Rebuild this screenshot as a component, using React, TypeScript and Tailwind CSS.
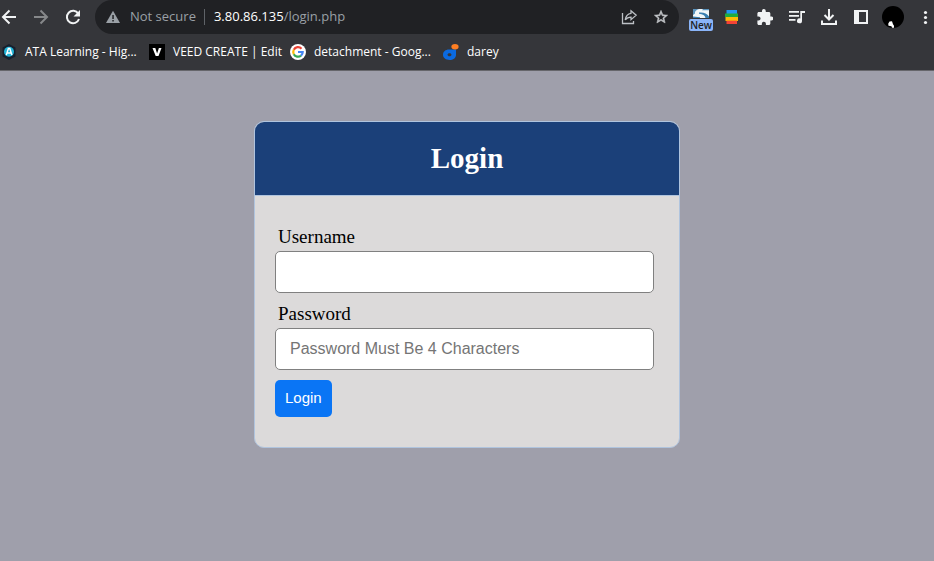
import type { ReactNode } from 'react';

const ICON = 'h-4 w-4 shrink-0';

function ToolButton({ label, children, className = '' }: { label: string; children: ReactNode; className?: string }) {
  return (
    <button type="button" aria-label={label} className={`flex shrink-0 items-center justify-center ${className}`}>
      {children}
    </button>
  );
}

function BackIcon() {
  return (
    <svg viewBox="0 0 16 16" className={ICON} fill="none" stroke="#f1f3f4" strokeWidth="2">
      <path d="M15 8H2.5M8.5 1.5 2 8l6.500 6.500" />
    </svg>
  );
}

function ForwardIcon() {
  return (
    <svg viewBox="0 0 16 16" className={ICON} fill="none" stroke="#86888a" strokeWidth="2">
      <path d="M1 8h12.500M7.500 1.500 14 8l-6.500 6.500" />
    </svg>
  );
}

function ReloadIcon() {
  return (
    <svg viewBox="0 0 16 16" className={ICON}>
      <path d="M13.300 4.600A6.200 6.200 0 1 0 14 10" fill="none" stroke="#f1f3f4" strokeWidth="2" />
      <path d="M15 1v6.500H8.500z" fill="#f1f3f4" />
    </svg>
  );
}

function WarningIcon() {
  return (
    <svg viewBox="0 0 14 14" className="h-3.5 w-3.5 shrink-0">
      <path d="M7 .8 14 13H0z" fill="#9aa0a6" />
      <path d="M6.300 5h1.500v4H6.300zM6.300 10h1.500v1.500H6.300z" fill="#202124" />
    </svg>
  );
}

function ShareIcon() {
  return (
    <svg viewBox="0 0 16 16" className={ICON} fill="none" stroke="#bdc1c6" strokeWidth="1.3">
      <path d="M1.500 4v10.500h11V12" />
      <path d="M10 1.800 15.200 6.200 10 10.700V8.100C7.500 8.100 5.700 8.900 4.200 10.900 4.700 7.500 6.500 4.800 10 4.300z" />
    </svg>
  );
}

function StarIcon() {
  return (
    <svg viewBox="0 0 24 24" className={ICON} fill="#c4c7ca">
      <path d="m22 9.240-7.190-.620L12 2 9.190 8.630 2 9.240l5.460 4.730L5.820 21 12 17.270 18.180 21l-1.630-7.030L22 9.240zM12 15.400l-3.760 2.270 1-4.280-3.320-2.880 4.380-.380L12 6.100l1.710 4.040 4.380.380-3.320 2.880 1 4.280L12 15.400z" stroke="#c4c7ca" strokeWidth=".8" />
    </svg>
  );
}

function ScribeIcon() {
  return (
    <span className="flex flex-col items-center pt-1.5">
      <svg viewBox="0 0 16 9" className="h-[9px] w-4">
        <path d="M0 0h16v9H0z" fill="#f1f6f8" />
        <path d="M0 0h6C3 1 1.500 2.500 2 4.500L0 6zM10 0h6v1.200H9z" fill="#5b93bc" />
        <path d="M6 3.500C10 3 14 4 16 7.500V9h-3.500C12 6.500 10 5.200 6 4.800zM0 7.500 7 8.200V9H0z" fill="#397eaf" />
      </svg>
      <span className="mt-px flex h-3 w-6 items-center justify-center rounded-[2px] bg-[#8ab4f8] text-[10px] font-semibold leading-3 text-[#202124]">
        New
      </span>
    </span>
  );
}

function StackIcon() {
  return (
    <svg viewBox="0 0 16 16" className={ICON}>
      <path d="M2.500 1h10.500v4H2.500z" fill="#2196f3" />
      <path d="M1 4.500h13V8H1z" fill="#1fac3d" />
      <path d="M1.500 8H14v4H1.500z" fill="#fbbc05" />
      <path d="M2.500 11.700h10.500V15H2.500z" fill="#f44336" />
    </svg>
  );
}

function PuzzleIcon() {
  return (
    <svg viewBox="1.500 1 21 21" className={ICON} fill="#f1f3f4">
      <path d="M20.500 11H19V7c0-1.100-.9-2-2-2h-4V3.500a2.500 2.500 0 0 0-5 0V5H4c-1.100 0-2 .9-2 2v3.800h1.500a2.700 2.700 0 0 1 0 5.400H2V20c0 1.100.9 2 2 2h3.800v-1.500a2.700 2.700 0 0 1 5.400 0V22H17c1.100 0 2-.9 2-2v-4h1.500a2.500 2.500 0 0 0 0-5z" />
    </svg>
  );
}

function QueueIcon() {
  return (
    <svg viewBox="0 0 16 16" className={ICON} fill="#f1f3f4">
      <path d="M0 2h10v1.700H0zM0 6h10v1.700H0zM0 10h6.500v1.700H0z" />
      <path d="M11.300 2H16v2h-3v7.700a2.500 2.500 0 1 1-1.700-2.300z" />
    </svg>
  );
}

function DownloadIcon() {
  return (
    <svg viewBox="0 0 16 16" className={ICON} fill="none" stroke="#f1f3f4" strokeWidth="2">
      <path d="M8 0v10M3.500 6 8 10.500 12.500 6M1 11.500V15h14v-3.500" />
    </svg>
  );
}

function PanelIcon() {
  return (
    <svg viewBox="0 0 16 16" className={ICON}>
      <path fillRule="evenodd" d="M1 1h14v14H1zm5 2v10h7V3z" fill="#f1f3f4" />
    </svg>
  );
}

function AvatarIcon() {
  return (
    <svg viewBox="0 0 22 22" className="h-[22px] w-[22px] shrink-0">
      <circle cx="11" cy="11" r="11" fill="#000" />
      <path d="m7.500 15.500 2.500-.3 1 3 1 1.500v2.100h-2l-.5-1.500-3-.5-.3-2z" fill="#fff" />
    </svg>
  );
}

function DotsIcon() {
  return (
    <svg viewBox="0 0 16 16" className={ICON} fill="#f1f3f4">
      <circle cx="8.500" cy="3.500" r="1.600" />
      <circle cx="8.500" cy="8.500" r="1.600" />
      <circle cx="8.500" cy="13.500" r="1.600" />
    </svg>
  );
}

function AtaLogo() {
  return (
    <svg viewBox="0 0 16 16" className={ICON}>
      <path d="M8 0 14.500 3.500v9L8 16l-6.500-3.500v-9z" fill="#17202e" />
      <circle cx="8" cy="7.800" r="5" fill="#23b5d8" />
      <path d="M5.300 11 7.400 4.500h1.400L10.900 11M6.300 9h3.600" fill="none" stroke="#fff" strokeWidth="1.400" />
    </svg>
  );
}

function VeedLogo() {
  return (
    <svg viewBox="0 0 16 16" className={ICON}>
      <path d="M0 0h16v16H0z" fill="#000" />
      <path d="M3.500 4h2.800L8.100 9.500 9.900 4h2.600L9.500 12H6.700z" fill="#fff" />
    </svg>
  );
}

function GoogleLogo() {
  return (
    <svg viewBox="0 0 16 16" className={ICON} fill="none" strokeWidth="2.200">
      <circle cx="8" cy="8" r="8" fill="#fff" />
      <path d="M11.500 4.700A4.700 4.700 0 0 0 3.800 5.800" stroke="#ea4335" />
      <path d="M3.800 5.800a4.700 4.700 0 0 0 0 4.400" stroke="#fbbc05" />
      <path d="M3.800 10.200a4.700 4.700 0 0 0 7.200 1.400" stroke="#34a853" />
      <path d="M11 11.600A4.700 4.700 0 0 0 12.700 8H8" stroke="#4285f4" />
    </svg>
  );
}

function DareyLogo() {
  return (
    <svg viewBox="0 0 16 16" className={ICON}>
      <path fillRule="evenodd" d="M6 5.500h7V11c0 3-3 5-6.500 5S0 14 0 10.800 2.500 5.500 6 5.500zm.5 3.800c-1.200 0-2 .6-2 1.500s.8 1.500 2 1.500 2-.6 2-1.500-.8-1.500-2-1.500z" fill="#0b6ae0" />
      <ellipse cx="12" cy="2.700" rx="3.600" ry="2.700" fill="#fd7e22" />
    </svg>
  );
}

function Bookmark({ icon, children }: { icon: ReactNode; children: ReactNode }) {
  return (
    <a href="#" className="flex items-center gap-2">
      {icon}
      <span>{children}</span>
    </a>
  );
}

export default function App() {
  return (
    <div className="flex min-h-screen flex-col bg-[#9f9fab]">
      <header className="border-b border-[#66666b] bg-[#35363a] font-['Open_Sans','Noto_Sans',sans-serif] text-white">
        <div className="flex h-[34px] items-center pl-px pr-px">
          <nav className="flex items-center gap-4" aria-label="Navigation">
            <ToolButton label="Back"><BackIcon /></ToolButton>
            <ToolButton label="Forward"><ForwardIcon /></ToolButton>
            <ToolButton label="Reload"><ReloadIcon /></ToolButton>
          </nav>
          <div className="ml-3.5 flex h-full min-w-0 flex-1 items-center rounded-full bg-[#202124] pl-[11px] pr-2.5 text-[13px] text-[#9aa0a6]">
            <WarningIcon />
            <span className="ml-2.5 shrink-0">Not secure</span>
            <span className="ml-2 h-4 w-px shrink-0 bg-[#5f6368]" />
            <span className="ml-[9px] flex-1 truncate">
              <span className="text-white">3.80.86.135</span>/login.php
            </span>
            <span className="flex gap-4">
              <ToolButton label="Share"><ShareIcon /></ToolButton>
              <ToolButton label="Bookmark this page"><StarIcon /></ToolButton>
            </span>
          </div>
          <ToolButton label="Scribe" className="ml-2.5"><ScribeIcon /></ToolButton>
          <ToolButton label="Stack" className="ml-[11px]"><StackIcon /></ToolButton>
          <div className="ml-[17px] flex items-center gap-4">
            <ToolButton label="Extensions"><PuzzleIcon /></ToolButton>
            <ToolButton label="Media"><QueueIcon /></ToolButton>
            <ToolButton label="Downloads"><DownloadIcon /></ToolButton>
            <ToolButton label="Side panel"><PanelIcon /></ToolButton>
          </div>
          <ToolButton label="Profile" className="ml-[13px]"><AvatarIcon /></ToolButton>
          <ToolButton label="Menu" className="ml-[13px]"><DotsIcon /></ToolButton>
        </div>
        <nav
          className="grid h-9 grid-cols-[148px_141px_153px_auto] items-center overflow-hidden whitespace-nowrap pl-px text-[12px]"
          aria-label="Bookmarks"
        >
          <Bookmark icon={<AtaLogo />}>ATA Learning - Hig...</Bookmark>
          <Bookmark icon={<VeedLogo />}>VEED CREATE | Edit</Bookmark>
          <Bookmark icon={<GoogleLogo />}>detachment - Goog...</Bookmark>
          <Bookmark icon={<DareyLogo />}>darey</Bookmark>
        </nav>
      </header>

      <main className="flex justify-center px-4 py-[50px] font-['Liberation_Serif',serif]">
        <div className="w-full max-w-[426px] overflow-hidden rounded-[10px] border border-[#b0c4de] bg-[#dcdada]">
          <h1 className="border-b border-[#b0c4de] bg-[#1b4079] py-5 text-center text-[29px] font-bold leading-[33px] text-white">
            Login
          </h1>
          <form className="flex flex-col items-start py-[30px] pl-5 pr-[25px]" onSubmit={(e) => e.preventDefault()}>
            <label htmlFor="username" className="mb-1 ml-[3px] text-[19px] leading-[21px]">Username</label>
            <input
              id="username"
              type="text"
              className="h-[42px] w-full rounded-[5px] border border-[#808080] bg-white px-3.5 font-['Liberation_Sans',sans-serif] text-base"
            />
            <label htmlFor="password" className="mb-1 ml-[3px] mt-2.5 text-[19px] leading-[21px]">Password</label>
            <input
              id="password"
              type="password"
              placeholder="Password Must Be 4 Characters"
              className="h-[42px] w-full rounded-[5px] border border-[#808080] bg-white px-3.5 font-['Liberation_Sans',sans-serif] text-base placeholder:text-[#757575]"
            />
            <button
              type="submit"
              className="mt-2.5 h-[37px] rounded-[5px] bg-[#0a75f5] px-2.5 font-['Liberation_Sans',sans-serif] text-[15px] text-white"
            >
              Login
            </button>
          </form>
        </div>
      </main>
    </div>
  );
}
